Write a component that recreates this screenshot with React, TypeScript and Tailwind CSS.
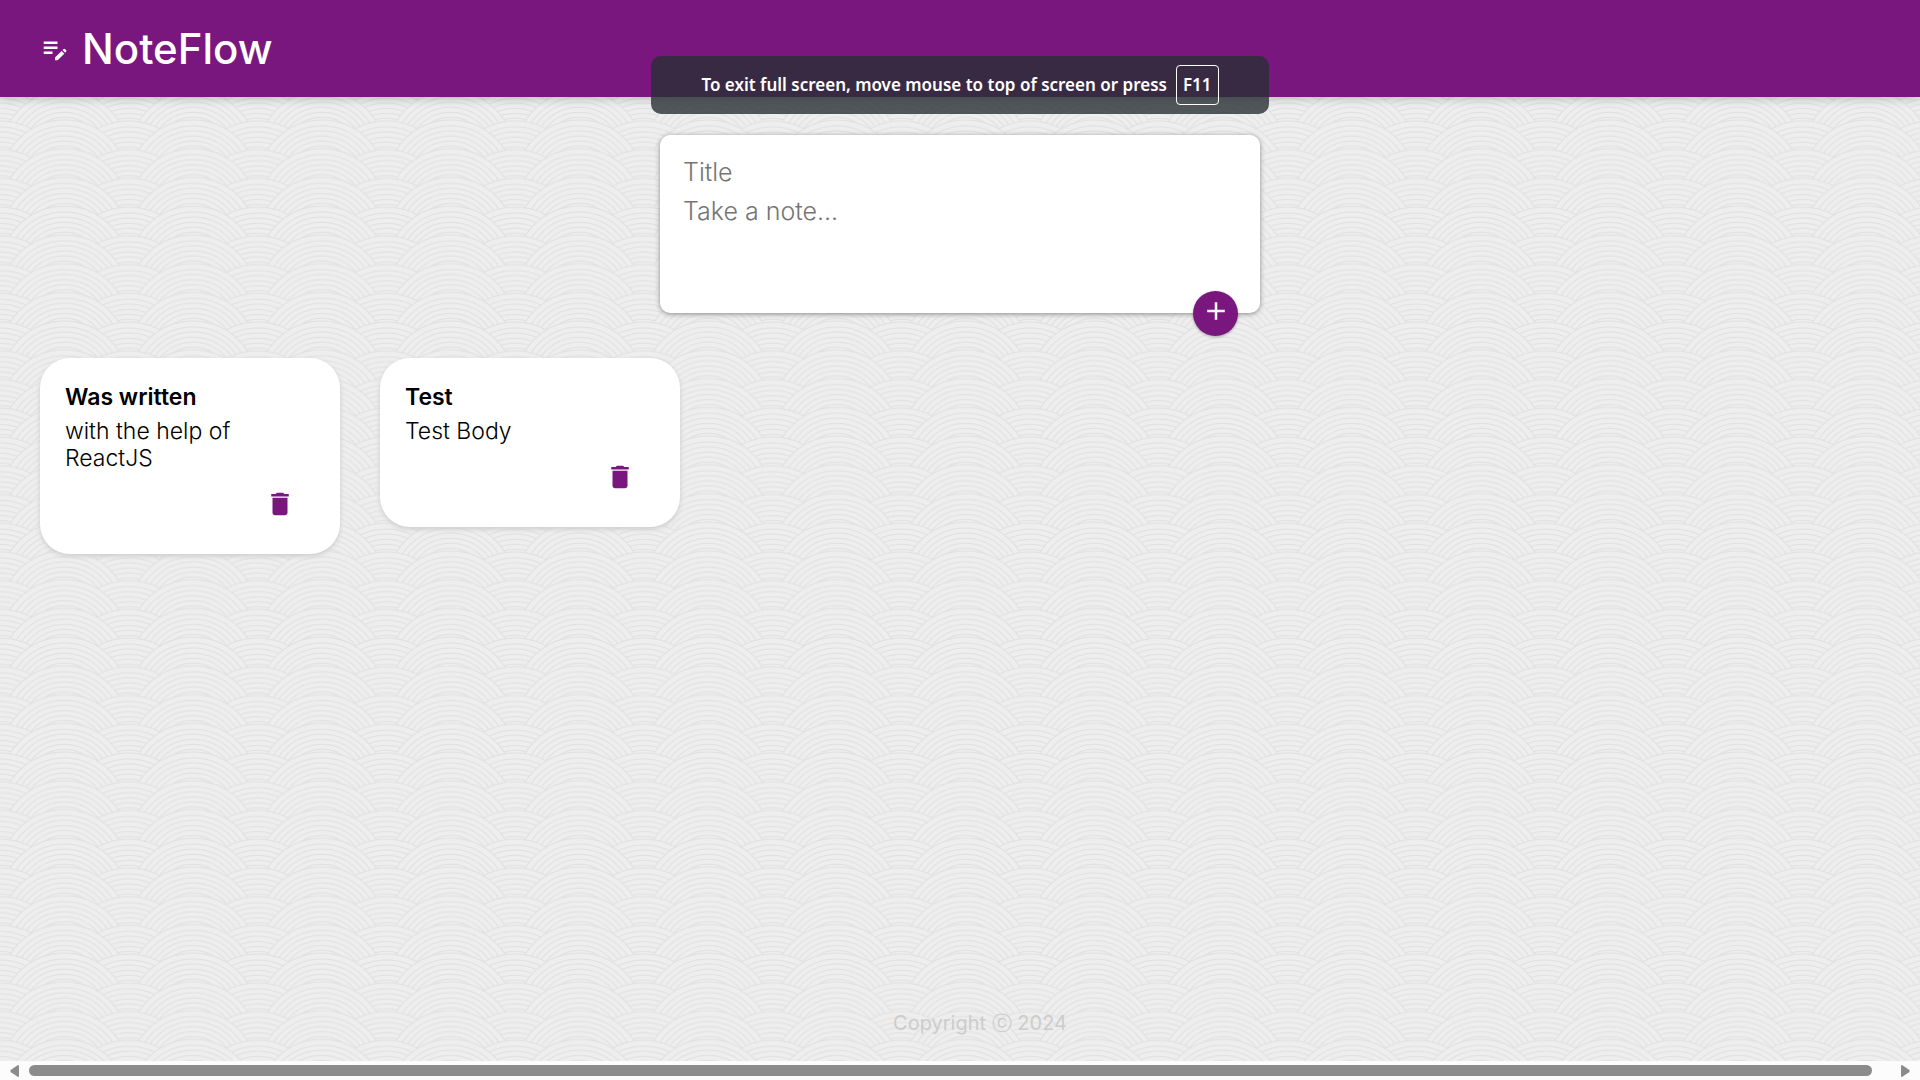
import { MdDelete, MdAdd, MdEditNote } from "react-icons/md";

const RADII = [64, 58, 53, 48, 43, 38, 33];
const ROW = 28.73;
const COLUMN = 128.75;

function Scale({ cx, top }: { cx: number; top: number }) {
  return (
    <g>
      {RADII.map((r) => (
        <circle key={r} cx={cx} cy={top + 64} r={r} fill="#eeeeee" stroke="#e0e0e0" strokeWidth="1" />
      ))}
    </g>
  );
}

function WaveBackground() {
  const rows = [-4, -3, -2, -1, 0, 1];
  return (
    <svg className="absolute inset-0 -z-10 h-full w-full" aria-hidden="true">
      <defs>
        <pattern id="waves" width={COLUMN} height={ROW} patternUnits="userSpaceOnUse" x="0" y="5">
          {rows.map((row) => (
            <g key={row}>
              <Scale cx={0} top={row * ROW + 1} />
              <Scale cx={COLUMN} top={row * ROW + 1} />
              <Scale cx={COLUMN / 2} top={row * ROW} />
            </g>
          ))}
        </pattern>
      </defs>
      <rect width="100%" height="100%" fill="url(#waves)" />
    </svg>
  );
}

type Note = { title: string; body: string };

const NOTES: Note[] = [
  { title: "Was written", body: "with the help of ReactJS" },
  { title: "Test", body: "Test Body" },
];

function NoteCard({ title, body }: Note) {
  return (
    <article className="w-[300px] rounded-[30px] bg-white px-[25px] pt-6 pb-[29px] shadow-[0_2px_5px_#cccccc]">
      <h2 className="text-[23px] leading-[30px] font-semibold text-black">{title}</h2>
      <p className="mt-[6px] w-[200px] text-[23px] leading-[27px] text-black">{body}</p>
      <div className="mt-[11px] flex justify-end pr-5">
        <button type="button" aria-label={`Delete ${title}`} className="flex h-[42px] w-[30px] items-center justify-center text-[#7a177f]">
          <MdDelete size={30} />
        </button>
      </div>
    </article>
  );
}

export default function App() {
  return (
    <div className="relative isolate flex min-h-screen flex-col bg-[#eeeeee] font-['Inter',sans-serif] font-light">
      <WaveBackground />
      <header className="flex h-[97px] items-center gap-3 bg-[#7a177f] px-10 shadow-[0_0_10px_rgba(0,0,0,0.3)]">
        <MdEditNote size={30} className="text-white" />
        <h1 className="text-[42px] leading-[60px] font-medium text-white">NoteFlow</h1>
      </header>

      <div role="status" className="absolute top-14 left-1/2 flex h-[58px] w-[618px] -translate-x-1/2 items-center justify-center gap-[9px] rounded-[10px] bg-[#292f35]/80 font-['Noto_Sans',sans-serif] text-[17px] font-semibold text-white">
        <span>To exit full screen, move mouse to top of screen or press</span>
        <kbd className="rounded border border-white px-1.5 py-1.5 font-['Noto_Sans',sans-serif] leading-[26px]">F11</kbd>
      </div>

      <main className="grow">
        <form className="relative mx-auto mt-[38px] flex h-[178px] w-[600px] flex-col rounded-[10px] bg-white px-[23px] pt-[17px] shadow-[0_1px_5px_rgba(138,137,137,1)]" onSubmit={(e) => e.preventDefault()}>
          <input aria-label="Title" placeholder="Title" className="h-10 w-full text-[25px] outline-none placeholder:text-[#757575]" />
          <textarea aria-label="Note" placeholder="Take a note..." className="h-[90px] w-full resize-none text-[25px] leading-[38px] outline-none placeholder:text-[#757575]" />
          <button type="submit" aria-label="Add note" className="absolute right-[22px] -bottom-[23px] flex h-[45px] w-[45px] justify-center rounded-full bg-[#7a177f] pt-[5px] text-white shadow-[0_1px_3px_rgba(0,0,0,0.3)]">
            <MdAdd size={30} />
          </button>
        </form>
        <section aria-label="Notes" className="mt-[45px] flex flex-wrap items-start gap-10 px-10">
          {NOTES.map((note) => (
            <NoteCard key={note.title} {...note} />
          ))}
        </section>
      </main>

      <footer className="pb-[22px] pl-10 text-center text-xl leading-8 font-normal text-[#cccccc]">Copyright ⓒ 2024</footer>

      <div aria-hidden="true" className="flex h-[19px] items-center bg-[#fcfcfc] px-[10px]">
        <svg width="9" height="12" viewBox="0 0 9 12" fill="#8b8b8b"><path d="M8 0Q9 0 9 1v10q0 1-1 1L1 7.200Q-.5 6 1 4.800Z" /></svg>
        <div className="mr-[29px] ml-[10px] h-[11px] grow rounded-full bg-[#8b8b8b]" />
        <svg width="9" height="12" viewBox="0 0 9 12" fill="#8b8b8b"><path d="M1 0Q0 0 0 1v10q0 1 1 1l7-4.800q1.500-1.200 0-2.400Z" /></svg>
      </div>
    </div>
  );
}
